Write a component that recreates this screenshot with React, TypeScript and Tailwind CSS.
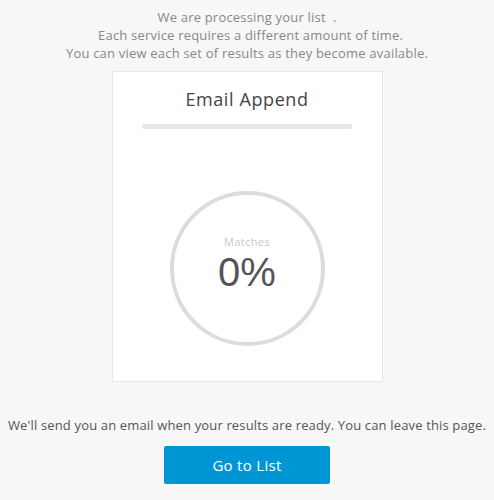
export default function App() {
  return (
    <div
      className="min-h-[500px] bg-[#f7f7f7] flex flex-col items-center pt-[8px]"
      style={{ fontFamily: '"Open Sans", "Liberation Sans", sans-serif' }}
    >
      <div className="text-center text-[13px] leading-[18px] tracking-[0.2px] text-[#888]">
        <p>We are processing your list&nbsp;&nbsp;.</p>
        <p>&nbsp;&nbsp;Each service requires a different amount of time.</p>
        <p>You can view each set of results as they become available.</p>
      </div>

      <div className="mt-[9px] w-[271px] h-[311px] bg-white border border-[#e8e8e8] flex flex-col items-center">
        <h2 className="mt-[15px] text-[18px] leading-[24px] tracking-[0.6px] text-[#444]">Email Append</h2>
        <div className="mt-[13px] w-[210px] h-[5px] rounded-full bg-[#e6e6e6]" />
        <div className="mt-[62px] w-[155px] h-[155px] rounded-full border-[4px] border-[#dcdcdc] flex flex-col items-center justify-center pb-[10px]">
          <span className="text-[11px] leading-[14px] tracking-[0.4px] text-[#c8c8c8]">Matches</span>
          <span className="mt-[2px] font-['Liberation_Sans',sans-serif] text-[40px] leading-[42px] text-[#555]">0%</span>
        </div>
      </div>

      <p className="mt-[34px] text-[13px] leading-[18px] tracking-[0.15px] text-[#555] text-center">
        We'll send you an email when your results are ready. You can leave this page.
      </p>
      <button className="mt-[12px] w-[166px] h-[38px] rounded-[2px] bg-[#0096d6] text-white text-[15px] tracking-[0.3px]">
        Go to List
      </button>
    </div>
  );
}
